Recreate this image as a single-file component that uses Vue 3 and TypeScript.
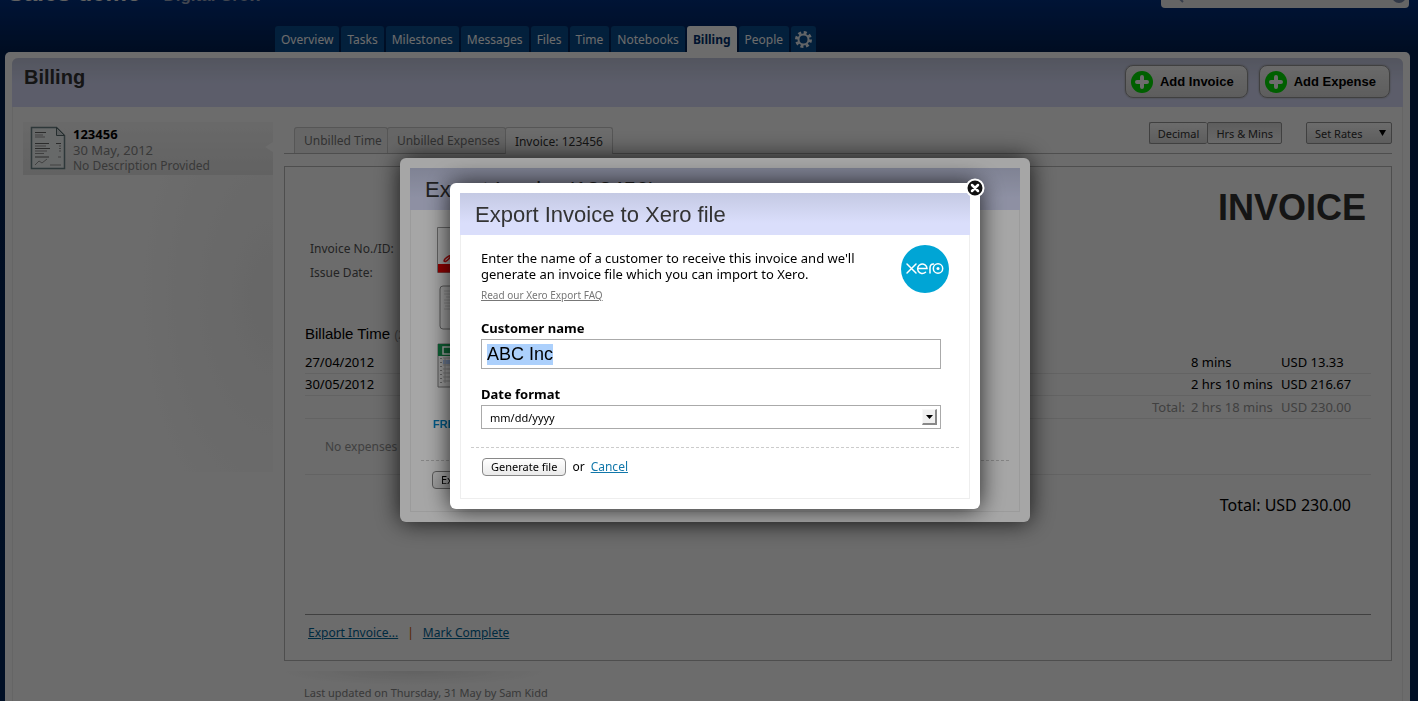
<script setup lang="ts">
import { ref, onMounted } from 'vue'

interface NavTab { label: string; active?: boolean }

const navTabs: NavTab[] = [
  { label: 'Overview' },
  { label: 'Tasks' },
  { label: 'Milestones' },
  { label: 'Messages' },
  { label: 'Files' },
  { label: 'Time' },
  { label: 'Notebooks' },
  { label: 'Billing', active: true },
  { label: 'People' },
]

const billingTabs: NavTab[] = [
  { label: 'Unbilled Time' },
  { label: 'Unbilled Expenses' },
  { label: 'Invoice: 123456', active: true },
]

const entries = [
  { date: '27/04/2012', time: '8 mins', amount: 'USD 13.33' },
  { date: '30/05/2012', time: '2 hrs 10 mins', amount: 'USD 216.67' },
]

const customer = ref('ABC Inc')
const dateFormat = ref('mm/dd/yyyy')
const customerInput = ref<HTMLInputElement | null>(null)

onMounted(() => {
  customerInput.value?.focus()
  customerInput.value?.select()
})
</script>

<template>
  <div class="app">
    <header class="top">
      <div class="project"><span class="project-name">Sales demo</span><span class="company">Digital Crew</span></div>
      <div class="search">
        <svg width="14" height="14" viewBox="0 0 14 14"><circle cx="6" cy="6" r="4" /><path d="M9 9l4 4" /></svg>
        <span class="search-clear"></span>
      </div>
    </header>

    <nav class="nav">
      <a v-for="t in navTabs" :key="t.label" href="#" class="nav-tab" :class="{ active: t.active }">{{ t.label }}</a>
      <a href="#" class="nav-tab gear" aria-label="Settings">
        <svg width="17" height="17" viewBox="0 0 17 17">
          <circle cx="8.500" cy="8.500" r="7" class="teeth" />
          <circle cx="8.500" cy="8.500" r="5" class="ring" />
        </svg>
      </a>
    </nav>

    <div class="frame">
      <div class="frame-inner">
        <div class="page-head">
          <h1>Billing</h1>
          <div class="head-buttons">
            <button v-for="b in ['Add Invoice', 'Add Expense']" :key="b" class="add" type="button">
              <svg width="22" height="22" viewBox="0 0 22 22"><circle cx="11" cy="11" r="11" fill="#00e000" /><path d="M11 6v10M6 11h10" stroke="#fff" stroke-width="4" stroke-linecap="round" /></svg>
              {{ b }}
            </button>
          </div>
        </div>

        <div class="columns">
          <aside class="side">
            <a href="#" class="invoice-card">
              <svg width="36" height="44" viewBox="0 0 36 44">
                <path d="M1.500 1.500h25l8 8v33h-33z" fill="#f4f8f9" stroke="#6d8489" stroke-width="1.500" />
                <path d="M26.500 1.500v8h8z" fill="#d8dfe0" stroke="#596a6e" />
                <path d="M5 6.500h11M5 17.500h14M5 22.500h15M5 31h14M26 17.500h5" stroke="#666" />
                <path d="M5 9h8M5 11h10M5 20h11M5 25h12M5 27.500h9M29 20h2M29 22.500h2M29 25h2M28 31h3" stroke="#999" />
                <path d="M5 39l4-4 3 2 5-4M20 39h11" stroke="#9a9a9a" fill="none" />
              </svg>
              <span class="card-text"><b>123456</b><span class="card-date">30 May, 2012</span><span>No Description Provided</span></span>
              <i class="notch"></i>
            </a>
          </aside>

          <main class="main">
            <div class="toolbar">
              <div class="tabs">
                <a v-for="t in billingTabs" :key="t.label" href="#" class="tab" :class="{ active: t.active }">{{ t.label }}</a>
              </div>
              <div class="segmented">
                <button type="button">Decimal</button><button type="button" class="on">Hrs &amp; Mins</button>
              </div>
              <button type="button" class="rates">Set Rates <svg width="7" height="6" viewBox="0 0 7 6"><path d="M0 0h7L3.500 6z" /></svg></button>
            </div>

            <section class="invoice">
              <h2>INVOICE</h2>
              <dl class="meta">
                <dt>Invoice No./ID:</dt>
                <dt>Issue Date:</dt>
              </dl>
              <h3>Billable Time <span>(2 items)</span></h3>
              <table class="entries">
                <tbody>
                  <tr v-for="e in entries" :key="e.date">
                    <td>{{ e.date }}</td><td></td><td>{{ e.time }}</td><td>{{ e.amount }}</td>
                  </tr>
                  <tr class="sum"><td></td><td>Total:</td><td>2 hrs 18 mins</td><td>USD 230.00</td></tr>
                </tbody>
              </table>
              <p class="none">No expenses</p>
              <p class="grand">Total: USD 230.00</p>
              <div class="actions"><a href="#">Export Invoice...</a><i>|</i><a href="#">Mark Complete</a></div>
            </section>
            <p class="updated">Last updated on Thursday, 31 May by Sam Kidd</p>
          </main>
        </div>
      </div>
    </div>

    <div class="layer">
      <div class="dialog back" role="dialog" aria-label="Export Invoice">
        <div class="dialog-body">
          <h2>Export Invoice '123456'</h2>
          <div class="formats">
            <svg width="40" height="46" viewBox="0 0 40 46"><path d="M.5.5h39v45H.5z" fill="#f8f8f8" stroke="#999" /><path d="M1 37h38v8.500H1z" fill="#e00000" /><path d="M15 28c-4 1-8 4-8 6 2 2 6-3 10-9" fill="none" stroke="#e01010" stroke-width="1.500" /></svg>
            <svg width="40" height="46" viewBox="0 0 40 46"><rect x="3" y="1" width="36" height="43" rx="3" fill="#f3f3f3" stroke="#888" /><path d="M7 6h9M7 9h6M9 12h8M7 15h9M7 18h8M8 21h8M7 24h6" stroke="#ccc" /></svg>
            <svg width="40" height="45" viewBox="0 0 40 45"><path d="M1 1h38v43H1z" fill="#f0f0f0" stroke="#888" /><path d="M1 1h38v12H1z" fill="#159450" /><path d="M6 4h10v7H6z" fill="none" stroke="#fff" stroke-width="1.500" /><path d="M4 15v26" stroke="#999" stroke-width="2" stroke-dasharray="1 3" /><path d="M6 17h20v4H6z" fill="#a9c2ee" /><path d="M6 15h26M6 22h26M6 26h26M6 30h26M6 34h26M6 38h26M8 15v25" stroke="#bbb" /></svg>
          </div>
          <div class="fresh">FreshBooks</div>
          <div class="dialog-actions"><button type="button">Export</button></div>
        </div>
      </div>
    </div>

    <div class="layer front">
      <div class="dialog" role="dialog" aria-label="Export Invoice to Xero file">
        <button type="button" class="close" aria-label="Close">
          <svg width="20" height="20" viewBox="0 0 20 20"><circle cx="10" cy="10" r="8.500" fill="#111" stroke="#fff" stroke-width="2" /><path d="M7 7l6 6M13 7l-6 6" stroke="#fff" stroke-width="2.500" stroke-linecap="round" /></svg>
        </button>
        <form class="dialog-body" @submit.prevent>
          <h2>Export Invoice to Xero file</h2>
          <div class="intro">
            <div class="intro-text">
              <p>Enter the name of a customer to receive this invoice and we'll generate an invoice file which you can import to Xero.</p>
              <a href="#" class="faq">Read our Xero Export FAQ</a>
            </div>
            <svg class="xero" width="48" height="48" viewBox="0 0 48 48">
              <circle cx="24" cy="24" r="24" fill="#00a5d5" />
              <g fill="none" stroke="#fff" stroke-width="1.500" stroke-linecap="round">
                <path d="M6 19l9 9M15 19l-9 9" />
                <path d="M17 23.500h9a4.700 4.700 0 1 0-1.500 3.700" />
                <path d="M29 28v-5c0-3 1-4 3.500-4" />
                <circle cx="37" cy="23.500" r="4.700" />
              </g>
              <circle cx="37" cy="23.500" r="1.500" fill="#fff" />
            </svg>
          </div>
          <div class="fields">
            <label for="customer">Customer name</label>
            <input id="customer" ref="customerInput" v-model="customer" type="text" />
            <label for="format">Date format</label>
            <div class="select-wrap">
              <select id="format" v-model="dateFormat">
                <option>mm/dd/yyyy</option>
                <option>dd/mm/yyyy</option>
              </select>
              <span class="arrow"><svg width="7" height="4" viewBox="0 0 7 4"><path d="M0 0h7L3.500 4z" /></svg></span>
            </div>
          </div>
          <div class="dialog-actions"><button type="submit">Generate file</button><span>or</span><a href="#">Cancel</a></div>
        </form>
      </div>
    </div>
  </div>
</template>

<style>
body { margin: 0; background: #002559; }
</style>

<style scoped>
* { box-sizing: border-box; }
h1, h2, h3, p, dl { margin: 0; }
button, input, select { font-family: inherit; }
a { text-decoration: none; color: inherit; }
.app {
  height: 100vh;
  overflow: hidden;
  font-family: "Noto Sans", sans-serif;
  font-size: 12px;
  line-height: 16px;
  color: #000;
  background: linear-gradient(#003080, #002050 52px, #002559);
}
.top { display: flex; justify-content: space-between; height: 26px; padding: 0 9px 0 8px; }
.project { font-family: "Liberation Sans", sans-serif; font-size: 17px; line-height: 22px; margin-top: -18px; }
.project-name { font-size: 24px; font-weight: bold; color: #e8e8e8; margin-right: 22px; }
.company { font-weight: bold; color: #9aa6bd; }
.search { display: flex; justify-content: space-between; width: 248px; height: 26px; margin-top: -18px; padding: 7px 3px 0 9px; border-radius: 4px; background: #eee; overflow: hidden; }
.search svg { fill: none; stroke: #8090b0; stroke-width: 2; }
.search-clear { width: 14px; height: 14px; border-radius: 50%; background: #7787a8; }
.nav { display: flex; gap: 2px; height: 26px; padding-left: 275px; }
.nav-tab { padding: 0 6px; line-height: 27px; color: #fff; background: #0a4d8e; border-radius: 3px 3px 0 0; }
.nav-tab.active { background: #fff; color: #003070; font-weight: bold; }
.gear { padding: 5px 4px 0; line-height: 0; }
.gear svg { fill: none; stroke: #e8eef5; }
.teeth { stroke-width: 3; stroke-dasharray: 3 2.500; }
.ring { stroke-width: 2; }

.frame { margin: 0 8px 0 5px; padding: 6px 7px 0; background: #fff; border-radius: 5px 5px 0 0; }
.frame-inner { min-height: 720px; border: solid #eee; border-width: 0 1px; border-radius: 6px 6px 0 0; }
.page-head { display: flex; justify-content: space-between; height: 49px; margin: 0 -1px; padding: 7px 13px 0 12px; border-radius: 6px 6px 0 0; background: linear-gradient(#c4c9e0, #dadefb 26px); }
h1 { font: bold 20px/24px "Liberation Sans", sans-serif; color: #333; }
.head-buttons { display: flex; gap: 11px; }
.add { display: flex; align-items: center; gap: 7px; height: 33px; padding: 0 13px 0 5px; border: 1px solid #999; border-radius: 8px; background: linear-gradient(#fafafa, #ddd); font: bold 13px/16px "Liberation Sans", sans-serif; box-shadow: 0 0 2px #999; }

.columns { display: flex; padding: 15px 10px 0; }
.side { width: 250px; height: 350px; background: radial-gradient(ellipse 130px 240px at 100% 50%, #f3f3f3, #fff); }
.invoice-card { position: relative; display: flex; gap: 7px; height: 53px; padding: 4px 7px; background: linear-gradient(#f9f9f9, #e8e8e8); color: #888; }
.card-text { display: flex; flex-direction: column; line-height: 15px; }
.card-text b { color: #000; font-size: 13px; line-height: 16px; }
.card-date { font-size: 13px; line-height: 16px; }
.notch { position: absolute; right: 0; top: 20px; border: solid transparent; border-width: 5px 8px 5px 0; border-right-color: #fff; }
.main { flex: 1; margin-left: 11px; }
.toolbar { display: flex; height: 32px; border-bottom: 1px solid #bbb; }
.tabs { display: flex; flex: 1; align-items: flex-end; padding-left: 10px; }
.tab { height: 26px; margin-right: -1px; padding: 0 5px 0 9px; border: 1px solid #ccc; border-bottom: 0; border-radius: 3px 3px 0 0; line-height: 26px; color: #777; background: #f2f2f2; }
.tab.active { background: #fff; color: #333; margin-bottom: -1px; height: 27px; line-height: 28px; padding: 0 9px; }
.segmented { display: flex; margin-right: 24px; }
.segmented button, .rates { height: 22px; padding: 0 8px; border: 1px solid #999; border-radius: 2px; background: linear-gradient(#fff, #ddd); color: #333; font-size: 11px; }
.segmented button:first-child { border-right: 0; }
.segmented .on { background: linear-gradient(#ddd, #fafafa); }
.rates { display: flex; align-items: center; justify-content: space-between; width: 86px; padding-right: 5px; white-space: nowrap; }

.invoice { margin-top: 12px; height: 495px; padding: 0 20px; border: 1px solid #bbb; display: flex; flex-direction: column; }
.invoice h2 { margin-top: 20px; padding-right: 5px; text-align: right; font: bold 36px/42px "Liberation Sans", sans-serif; color: #333; }
.meta { padding: 8px 5px 0; line-height: 24px; color: #555; }
h3 { margin-top: 39px; font: 15px/20px "Liberation Sans", sans-serif; }
h3 span { color: #999; font-size: 12px; }
.entries { width: 100%; margin-top: 6px; border-collapse: collapse; table-layout: fixed; font-size: 13px; }
.entries td { height: 22px; padding: 0; border-bottom: 1px solid #eaeaea; }
.entries td:nth-child(2) { width: 80px; padding-right: 6px; text-align: right; }
.entries td:nth-child(3) { width: 90px; }
.entries td:nth-child(4) { width: 90px; }
.entries .sum td { height: 23px; color: #999; }
.none { padding: 20px; height: 56px; line-height: 16px; color: #999; border-bottom: 1px solid #eaeaea; }
.grand { margin-top: 20px; padding-right: 20px; text-align: right; font-size: 16px; line-height: 20px; }
.actions { margin-top: auto; height: 46px; padding: 10px 3px; border-top: 1px solid #999; color: #006699; }
.actions a { text-decoration: underline; }
.actions i { margin: 0 9px; font-style: normal; color: #c50; }
.updated { margin-top: 10px; padding: 14px 20px; font-size: 11px; color: #888; background: radial-gradient(ellipse 130px 14px at 130px 0, #e8e8e8, #fff); }

.layer { position: fixed; inset: 0; display: flex; justify-content: center; align-items: flex-start; padding: 158px 0 0 12px; background: rgba(0, 0, 0, .35); }
.layer.front { padding-top: 183px; }
.dialog { position: relative; width: 530px; padding: 10px; border-radius: 6px; background: #fff; box-shadow: 0 0 25px rgba(0, 0, 0, .8); }
.dialog.back { width: 630px; }
.dialog-body { border: 1px solid #eee; border-top: 0; padding: 0 10px 22px; }
.back .dialog-body { height: 344px; }
.dialog h2 { height: 42px; margin: 0 -11px; padding-left: 15px; background: linear-gradient(#c4c9e3, #dadefb 30px); color: #333; font: 22px/44px "Liberation Sans", sans-serif; }
.formats { display: flex; flex-direction: column; gap: 12px; margin: 17px 0 0 16px; }
.fresh { margin: 28px 0 28px 12px; font: bold 11px/16px "Liberation Sans", sans-serif; color: #08c; text-transform: uppercase; }
.intro { display: flex; justify-content: space-between; padding: 10px 10px 0; }
.intro-text { width: 395px; padding-top: 5px; font-size: 13px; }
.faq { display: inline-block; margin-top: 5px; font-size: 10px; text-decoration: underline; color: #777; }
.fields { padding: 16px 18px 18px 10px; }
.fields label { display: block; font-size: 13px; font-weight: bold; line-height: 18px; }
.fields input { display: block; width: 100%; height: 30px; margin: 2px 0 16px; padding: 0 5px; border: 1px solid #aaa; border-radius: 0; outline: none; font: 18px/21px "Liberation Sans", sans-serif; }
.fields input::selection { background: #acd0fc; color: #000; }
.select-wrap { position: relative; margin-top: 2px; }
.fields select { display: block; width: 100%; height: 24px; padding: 0 8px; border: 1px solid #aaa; border-radius: 0; background: #fff; font-size: 11px; appearance: none; color: #000; }
.arrow { position: absolute; right: 4px; top: 4px; width: 15px; height: 16px; display: flex; align-items: center; justify-content: center; background: #f0f0f0; border: solid; border-width: 1px 2px 2px 1px; border-color: #f8f8f8 #888 #888 #f8f8f8; pointer-events: none; }
.dialog-actions { display: flex; align-items: center; padding: 10px 11px 0; border-top: 1px dashed #ccc; }
.dialog-actions button { height: 18px; padding: 0 8px; border: 1px solid #888; border-radius: 4px; background: linear-gradient(#fff, #eaeaea); font-size: 11px; line-height: 14px; }
.dialog-actions span { margin: 0 6px; }
.dialog-actions a { color: #17a; text-decoration: underline; }
.close { position: absolute; right: -5px; top: -5px; width: 20px; height: 20px; padding: 0; border: 0; background: none; }
.close svg { display: block; }
</style>
